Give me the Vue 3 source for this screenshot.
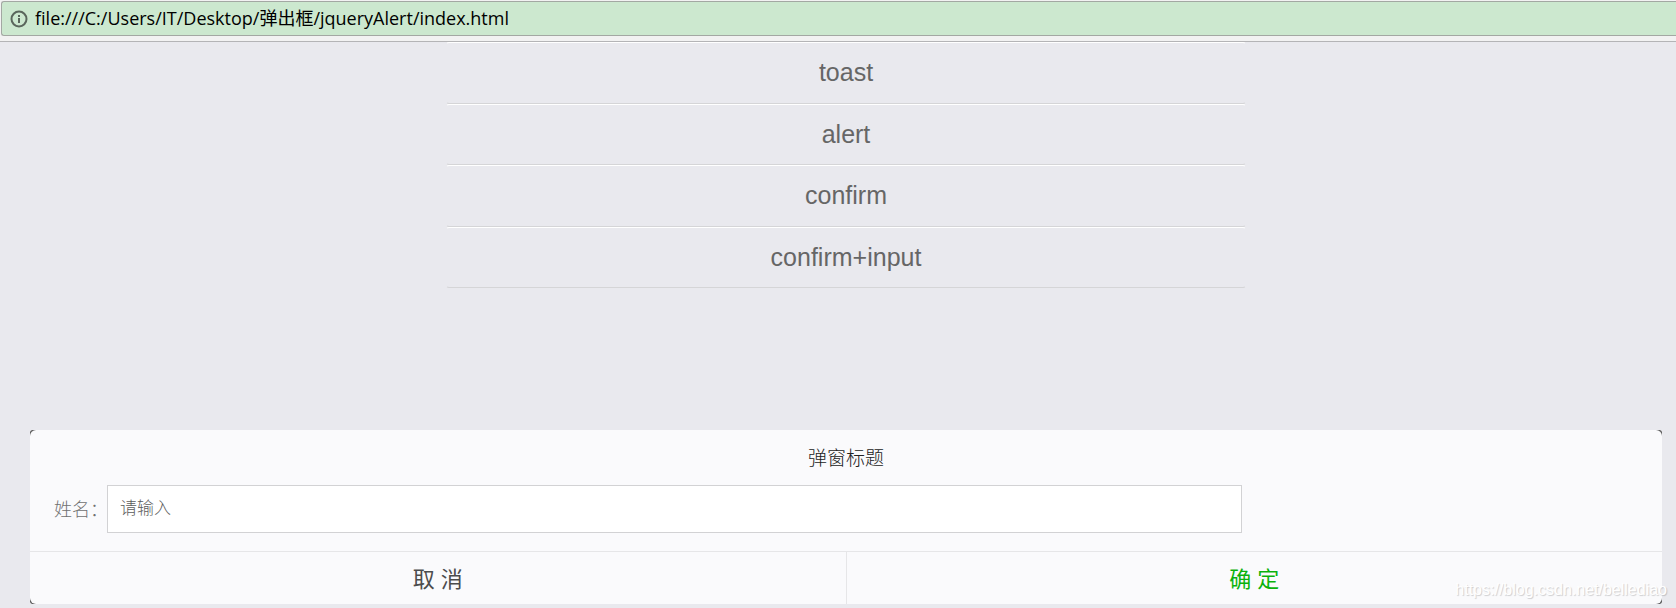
<template>
  <div class="page">
    <header class="toolbar">
      <div class="address-bar">
        <svg class="info-icon" viewBox="0 0 18 18" aria-hidden="true">
          <circle cx="9" cy="9" r="7.5" />
          <path d="M9 8v5M9 5v2" />
        </svg>
        <input v-model="url" class="address" type="text" aria-label="URL" />
      </div>
    </header>

    <main class="content">
      <div class="demo-list">
        <button v-for="item in demos" :key="item" type="button" class="demo-btn">{{ item }}</button>
      </div>

      <div class="dialog-wrap">
        <section class="dialog" role="dialog" aria-labelledby="dialog-title">
          <h2 id="dialog-title" class="dialog-title">弹窗标题</h2>
          <div class="dialog-body">
            <label for="name">姓名：</label>
            <input id="name" v-model="name" type="text" placeholder="请输入" />
          </div>
          <div class="dialog-footer">
            <button type="button" class="cancel">取 消</button>
            <button type="button" class="ok">确 定</button>
          </div>
        </section>
      </div>
    </main>

    <span class="watermark">https://blog.csdn.net/bellediao</span>
  </div>
</template>

<script setup>
import { ref } from 'vue'

const url = ref('file:///C:/Users/IT/Desktop/弹出框/jqueryAlert/index.html')
const demos = ['toast', 'alert', 'confirm', 'confirm+input']
const name = ref('')
</script>

<style>
body {
  margin: 0;
  background: #e9e9ee;
}
</style>

<style scoped>
.page {
  position: relative;
  display: flex;
  flex-direction: column;
  min-height: 100vh;
  overflow: hidden;
  font-family: "Liberation Sans", "Noto Sans CJK SC", sans-serif;
}

.toolbar {
  padding: 1px 0 5px 1px;
  background: #f2f2f2;
  border-bottom: 1px solid #b4b4b6;
}

.address-bar {
  display: flex;
  align-items: center;
  box-sizing: border-box;
  height: 35px;
  padding-left: 8px;
  background: #cce8cf;
  border: 1px solid #a3a8a3;
  border-right: 0;
  border-radius: 3px 0 0 3px;
}

.info-icon {
  width: 18px;
  height: 18px;
  margin-right: 7px;
  fill: none;
  stroke: #5a665c;
  stroke-width: 2;
}

.address {
  flex: 1;
  padding: 0 0 3px;
  border: 0;
  outline: 0;
  background: none;
  color: #000;
  font: 18px "Open Sans", "Noto Sans CJK SC", sans-serif;
}

.content {
  flex: 1;
  display: flex;
  flex-direction: column;
  justify-content: space-between;
  padding: 0 14px 4px 30px;
}

.demo-list {
  display: grid;
  grid-template-rows: repeat(4, 1fr);
  width: 100%;
  max-width: 800px;
  height: 246px;
  margin: 0 auto;
}

.demo-btn {
  padding: 0;
  border: 1px solid transparent;
  border-top-color: #fff;
  border-bottom-color: #d5d5d7;
  border-radius: 3px;
  background: none;
  color: #666;
  font: 25px "Liberation Sans", sans-serif;
}

/* dark layer that shows behind the rounded corners */
.dialog-wrap {
  background: #555;
  border-radius: 3px;
}

.dialog {
  background: #fafafc;
  border-radius: 6px;
}

.dialog-title {
  margin: 0;
  padding: 15px 0 12px;
  color: #222;
  font-size: 19px;
  font-weight: 300;
  line-height: 28px;
  text-align: center;
}

.dialog-body {
  display: flex;
  align-items: center;
  padding: 0 24px 18px;
}

.dialog-body label {
  width: 53px;
  padding-bottom: 3px;
  color: #707070;
  font-size: 18px;
  font-weight: 300;
  white-space: nowrap;
}

.dialog-body input {
  width: 70%;
  height: 46px;
  padding: 0 12px;
  border: 1px solid #d2d2d4;
  background: #fff;
  color: #333;
  font: 300 17px "Liberation Sans", "Noto Sans CJK SC", sans-serif;
}

.dialog-body input::placeholder {
  color: #5c5c5c;
}

.dialog-footer {
  display: flex;
  border-top: 1px solid #e6e6e8;
}

.dialog-footer button {
  flex: 1;
  height: 52px;
  padding: 0 0 3px;
  border: 0;
  background: none;
  font: 22px "Liberation Sans", "Noto Sans CJK SC", sans-serif;
}

.dialog-footer .cancel {
  border-right: 1px solid #e6e6e8;
  color: #4c4c4c;
}

.dialog-footer .ok {
  color: #0bb20c;
}

.watermark {
  position: absolute;
  right: 9px;
  bottom: 8px;
  color: #fff;
  font-size: 16px;
  line-height: 20px;
  text-shadow: 1px 1px 1px rgba(0, 0, 0, 0.18);
}
</style>
